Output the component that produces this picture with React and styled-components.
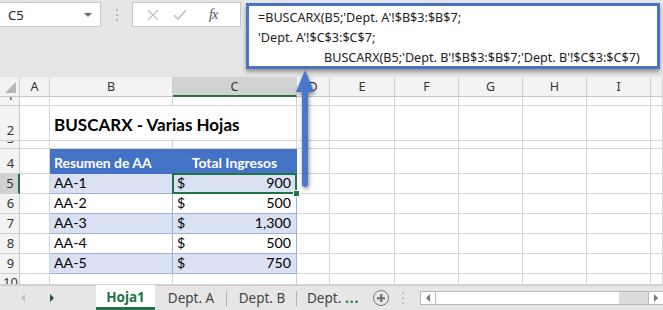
import React from 'react';
import styled, { createGlobalStyle, css } from 'styled-components';

const GlobalStyle = createGlobalStyle`
  html, body { margin: 0; padding: 0; background: #e6e6e6; }
  body { font-family: "Noto Sans", "Liberation Sans", sans-serif; }
`;

const COLS = [
  { key: 'h', w: 20 },
  { key: 'A', w: 30 },
  { key: 'B', w: 123 },
  { key: 'C', w: 124 },
  { key: 'D', w: 33 },
  { key: 'E', w: 65 },
  { key: 'F', w: 64 },
  { key: 'G', w: 64 },
  { key: 'H', w: 64 },
  { key: 'I', w: 64 },
  { key: 'J', w: 12 },
];

const DATA = [
  ['AA-1', '900'],
  ['AA-2', '500'],
  ['AA-3', '1,300'],
  ['AA-4', '500'],
  ['AA-5', '750'],
];

const Page = styled.div`
  position: relative;
  width: 663px;
  height: 310px;
  overflow: hidden;
  background: #e6e6e6;
  display: flex;
  flex-direction: column;
`;

/* formula bar */
const FormulaBar = styled.div`
  height: 77px;
  display: flex;
  align-items: flex-start;
  padding-top: 2px;
  box-sizing: border-box;
`;

const NameBox = styled.div`
  width: 101px;
  height: 25px;
  box-sizing: border-box;
  background: #fff;
  border: 1px solid #c6c6c6;
  border-left: none;
  display: flex;
  align-items: center;
  justify-content: space-between;
  padding: 0 8px 0 8px;
  font-size: 13px;
  color: #222;
`;

const DropTri = styled.span`
  width: 0;
  height: 0;
  border-left: 4px solid transparent;
  border-right: 4px solid transparent;
  border-top: 4px solid #6a6a6a;
`;

const VDots = styled.div`
  width: 31px;
  height: 25px;
  display: flex;
  flex-direction: column;
  align-items: center;
  justify-content: center;
  gap: 3px;
  span {
    width: 2px;
    height: 2px;
    background: #b4b4b4;
  }
`;

const FxBox = styled.div`
  width: 109px;
  height: 25px;
  box-sizing: border-box;
  background: #fff;
  border: 1px solid #c6c6c6;
  display: flex;
  align-items: center;
  padding-left: 14px;
  gap: 14px;
  color: #bdbdbd;
`;

const FxLabel = styled.span`
  margin-left: 8px;
  font-family: "Liberation Serif", serif;
  font-style: italic;
  font-size: 14px;
  color: #555;
  letter-spacing: -1px;
`;

const FormulaBox = styled.div`
  margin-left: 5px;
  margin-top: 1px;
  width: 414px;
  height: 66px;
  box-sizing: border-box;
  background: #fff;
  border: 3px solid #4a73c2;
  box-shadow: 0 3px 4px rgba(0, 0, 0, 0.35);
  padding: 2px 0 0 9px;
  font-family: "Noto Sans", sans-serif;
  font-size: 12.6px;
  line-height: 20px;
  color: #222;
  white-space: pre;
  z-index: 2;
`;

const FormulaLine = styled.div`
  padding-left: ${(p) => p.$indent || 0}px;
`;

/* sheet */
const Sheet = styled.div`
  display: grid;
  grid-template-columns: ${COLS.map((c) => c.w + 'px').join(' ')};
  grid-template-rows: 20px 9px 35px 8px 25px repeat(5, 20px) 11px;
  background: #fff;
  font-family: "Lato", "Liberation Sans", sans-serif;
`;

const HeadCell = styled.div`
  box-sizing: border-box;
  background: ${(p) => (p.$selected ? '#d2d2d2' : '#f3f3f3')};
  border-right: 1px solid #d0d0d0;
  border-bottom: 1px solid #c8c8c8;
  ${(p) => p.$selected && 'border-bottom: 2px solid #217346;'}
  display: flex;
  align-items: center;
  justify-content: center;
  font-family: "Noto Sans", sans-serif;
  font-size: 12.5px;
  color: #333;
  overflow: hidden;
`;

const Corner = styled(HeadCell)`
  position: relative;
  &::after {
    content: '';
    position: absolute;
    right: 3px;
    bottom: 3px;
    width: 0;
    height: 0;
    border-left: 11px solid transparent;
    border-bottom: 11px solid #b8b8b8;
  }
`;

const RowHead = styled.div`
  box-sizing: border-box;
  background: ${(p) => (p.$selected ? '#d2d2d2' : '#f3f3f3')};
  border-right: ${(p) => (p.$selected ? '2px solid #217346' : '1px solid #c8c8c8')};
  border-bottom: 1px solid #d0d0d0;
  display: flex;
  align-items: ${(p) => (p.$top ? 'flex-start' : 'flex-end')};
  justify-content: center;
  font-family: "Noto Sans", sans-serif;
  font-size: 13px;
  line-height: 17px;
  color: #333;
  overflow: hidden;
  padding-bottom: ${(p) => (p.$top ? 0 : 1)}px;
  padding-left: 2px;
`;

const Cell = styled.div`
  position: relative;
  box-sizing: border-box;
  border-right: 1px solid ${(p) => p.$line || '#d4d4d4'};
  border-bottom: 1px solid ${(p) => p.$lineB || p.$line || '#d4d4d4'};
  background: ${(p) => p.$bg || '#fff'};
  display: flex;
  align-items: flex-end;
  padding: 0 4px 1px 4px;
  font-size: 14.2px;
  line-height: 18px;
  color: #000;
  white-space: nowrap;
  ${(p) => p.$span && `grid-column: span ${p.$span};`}
  ${(p) => p.$bold && 'font-weight: 700; font-size: 13.9px;'}
  ${(p) => p.$center && 'justify-content: center;'}
  ${(p) => p.$light && 'color: #fff;'}
  ${(p) =>
    p.$active &&
    css`
      &::after {
        content: '';
        position: absolute;
        left: -1px;
        top: -1px;
        right: -1px;
        bottom: -1px;
        border: 2px solid #217346;
        pointer-events: none;
      }
      &::before {
        content: '';
        position: absolute;
        right: -4px;
        bottom: -4px;
        width: 5px;
        height: 5px;
        background: #217346;
        border: 1px solid #fff;
        z-index: 1;
      }
    `}
`;

const Title = styled(Cell)`
  align-items: center;
  padding-top: 4px;
  font-size: 17px;
  font-weight: 700;
`;

const Money = styled.div`
  display: flex;
  justify-content: space-between;
  width: 100%;
  padding: 0 5px 0 4px;
  box-sizing: border-box;
`;

/* arrow */
const Arrow = styled.svg`
  position: absolute;
  left: 293px;
  top: 66px;
  filter: drop-shadow(1px 2px 2px rgba(0, 0, 0, 0.45));
  z-index: 3;
`;

/* tabs */
const TabBar = styled.div`
  flex: 1;
  display: flex;
  align-items: stretch;
  background: #e6e6e6;
  border-top: 1px solid #cfcfcf;
  font-family: "Noto Sans", sans-serif;
  font-size: 13.5px;
  color: #444;
`;

const Nav = styled.div`
  width: 96px;
  display: flex;
  align-items: center;
  padding-left: 21px;
  gap: 25px;
  box-sizing: border-box;
`;

const NavTri = styled.span`
  width: 0;
  height: 0;
  border-top: 4px solid transparent;
  border-bottom: 4px solid transparent;
  ${(p) =>
    p.$left
      ? 'border-right: 4px solid #c4c4c4;'
      : 'border-left: 4px solid #1f5b34;'}
`;

const Tab = styled.div`
  width: ${(p) => p.$w}px;
  box-sizing: border-box;
  display: flex;
  align-items: center;
  justify-content: ${(p) => (p.$left ? 'flex-start' : 'center')};
  padding-left: ${(p) => (p.$left ? 10 : 0)}px;
  position: relative;
  ${(p) =>
    p.$active
      ? css`
          background: #fff;
          color: #217346;
          font-weight: 700;
          border-bottom: 3px solid #217346;
          padding-top: 2px;
          margin-top: -1px;
        `
      : css`
          &::after {
            content: '';
            position: absolute;
            right: 0;
            top: 5px;
            bottom: 4px;
            width: 1px;
            background: #b5b5b5;
          }
        `}
  ${(p) => p.$last && '&::after { display: none; }'}
`;

const More = styled.span`
  align-self: center;
  color: #217346;
  font-weight: 700;
  letter-spacing: 1px;
  margin-left: 8px;
`;

const PlusBtn = styled.div`
  margin-left: 14px;
  align-self: center;
  width: 14px;
  height: 14px;
  border: 1px solid #7a7a7a;
  border-radius: 50%;
  position: relative;
  &::before,
  &::after {
    content: '';
    position: absolute;
    background: #6a6a6a;
    left: 50%;
    top: 50%;
    transform: translate(-50%, -50%);
  }
  &::before { width: 8px; height: 1.5px; }
  &::after { width: 1.5px; height: 8px; }
`;

const Grip = styled(VDots)`
  width: 28px;
  height: auto;
  margin-left: 0;
  span { background: #c4c4c4; }
`;

const Scroll = styled.div`
  align-self: center;
  margin-left: 3px;
  flex: 1;
  height: 14px;
  box-sizing: border-box;
  border: 1px solid #b9b9b9;
  border-right: none;
  background: #fff;
  display: flex;
`;

const ScrollBtn = styled.div`
  width: 14px;
  display: flex;
  align-items: center;
  justify-content: center;
  background: #fff;
  ${(p) => (p.$right ? 'border-left: 1px solid #b9b9b9;' : 'border-right: 1px solid #b9b9b9;')}
`;

const ScrollTri = styled.span`
  width: 0;
  height: 0;
  border-top: 4px solid transparent;
  border-bottom: 4px solid transparent;
  ${(p) => (p.$right ? 'border-left: 4px solid #7a7a7a;' : 'border-right: 4px solid #7a7a7a;')}
`;

const Thumb = styled.div`
  width: 183px;
  background: #fff;
`;

const Track = styled.div`
  flex: 1;
  background: #dcdcdc;
`;

const BLUE_LINE = '#9bb3de';

const App = () => {
  const letters = COLS.slice(1).map((c) => c.key);

  const plainRow = (n, opts = {}) => (
    <React.Fragment key={n}>
      <RowHead $top={opts.top} $selected={opts.selected}>{n}</RowHead>
      {letters.map((l) => (
        <Cell key={l} />
      ))}
    </React.Fragment>
  );

  return (
    <>
      <GlobalStyle />
      <Page>
        <FormulaBar>
          <NameBox>
            C5
            <DropTri />
          </NameBox>
          <VDots>
            <span />
            <span />
            <span />
          </VDots>
          <FxBox>
            <svg width="12" height="12" viewBox="0 0 12 12">
              <path d="M1 1 L11 11 M11 1 L1 11" stroke="#c2c2c2" strokeWidth="1.3" />
            </svg>
            <svg width="14" height="12" viewBox="0 0 14 12">
              <path d="M1 6 L5 10 L13 1" stroke="#c2c2c2" strokeWidth="1.6" fill="none" />
            </svg>
            <FxLabel>fx</FxLabel>
          </FxBox>
          <FormulaBox>
            <FormulaLine>=BUSCARX(B5;'Dept. A'!$B$3:$B$7;</FormulaLine>
            <FormulaLine>'Dept. A'!$C$3:$C$7;</FormulaLine>
            <FormulaLine $indent={66}>BUSCARX(B5;'Dept. B'!$B$3:$B$7;'Dept. B'!$C$3:$C$7)</FormulaLine>
          </FormulaBox>
        </FormulaBar>

        <Sheet>
          <Corner />
          {letters.map((l) => (
            <HeadCell key={l} $selected={l === 'C'}>
              {l === 'J' ? '' : l}
            </HeadCell>
          ))}

          {plainRow(1)}

          <RowHead>2</RowHead>
          <Cell />
          <Title $span={2}>BUSCARX - Varias Hojas</Title>
          {letters.slice(3).map((l) => (
            <Cell key={l} />
          ))}

          {plainRow(3)}

          <RowHead>4</RowHead>
          <Cell />
          <Cell $bg="#4472c4" $line="#4472c4" $bold $light>
            Resumen de AA
          </Cell>
          <Cell $bg="#4472c4" $line="#4472c4" $lineB={BLUE_LINE} $bold $center $light>
            Total Ingresos
          </Cell>
          {letters.slice(3).map((l) => (
            <Cell key={l} />
          ))}

          {DATA.map(([name, value], i) => {
            const bg = i % 2 === 0 ? '#d9e1f2' : '#fff';
            return (
              <React.Fragment key={name}>
                <RowHead $selected={i === 0}>{i + 5}</RowHead>
                <Cell />
                <Cell $bg={bg} $line={BLUE_LINE}>{name}</Cell>
                <Cell $bg={bg} $line={BLUE_LINE} $active={i === 0} style={{ padding: '0 0 1px 0' }}>
                  <Money>
                    <span>$</span>
                    <span>{value}</span>
                  </Money>
                </Cell>
                {letters.slice(3).map((l) => (
                  <Cell key={l} />
                ))}
              </React.Fragment>
            );
          })}

          {plainRow(10, { top: true })}
        </Sheet>

        <Arrow width="26" height="124" viewBox="0 0 26 124">
          <path
            d="M12 4 L3 26 L9 26 L9 118 Q9 121 12 121 Q15 121 15 118 L15 26 L21 26 Z"
            fill="#4a78c8"
          />
        </Arrow>

        <TabBar>
          <Nav>
            <NavTri $left />
            <NavTri />
          </Nav>
          <Tab $w={59} $active>Hoja1</Tab>
          <Tab $w={72}>Dept. A</Tab>
          <Tab $w={70}>Dept. B</Tab>
          <Tab $w={40} $left $last>Dept.</Tab>
          <More>...</More>
          <PlusBtn />
          <Grip>
            <span />
            <span />
            <span />
          </Grip>
          <Scroll>
            <ScrollBtn>
              <ScrollTri />
            </ScrollBtn>
            <Thumb />
            <Track />
            <ScrollBtn $right>
              <ScrollTri $right />
            </ScrollBtn>
          </Scroll>
        </TabBar>
      </Page>
    </>
  );
};

export default App;
